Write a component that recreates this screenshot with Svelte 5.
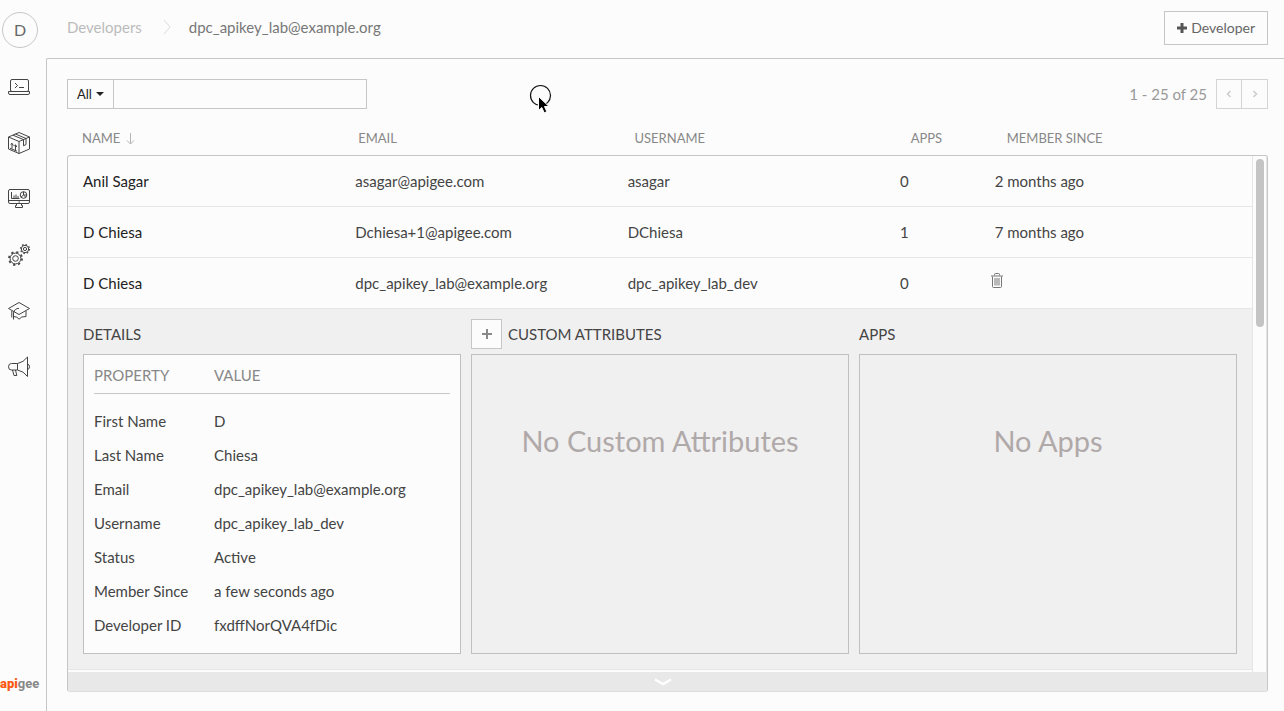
<script>
  const developers = [
    { name: 'Anil Sagar', email: 'asagar@apigee.com', username: 'asagar', apps: 0, since: '2 months ago' },
    { name: 'D Chiesa', email: 'Dchiesa+1@apigee.com', username: 'DChiesa', apps: 1, since: '7 months ago' },
    { name: 'D Chiesa', email: 'dpc_apikey_lab@example.org', username: 'dpc_apikey_lab_dev', apps: 0, since: null }
  ];

  const details = [
    ['First Name', 'D'],
    ['Last Name', 'Chiesa'],
    ['Email', 'dpc_apikey_lab@example.org'],
    ['Username', 'dpc_apikey_lab_dev'],
    ['Status', 'Active'],
    ['Member Since', 'a few seconds ago'],
    ['Developer ID', 'fxdffNorQVA4fDic']
  ];

  let query = $state('');
</script>

<div class="shell">
  <nav class="rail" aria-label="Main">
    <button class="avatar" aria-label="Account">D</button>
    <a href="#develop" aria-label="Develop">
      <svg width="24" height="24" viewBox="0 0 24 24"><rect x="3.500" y="4.500" width="18" height="12" rx="1.500" /><path d="M1.500 16.500h21v1.500q0 1.500-1.500 1.500H3q-1.500 0-1.500-1.500z" /><path d="M8 8l2.500 2.500L8 13M12 12.500h5" /></svg>
    </a>
    <a href="#publish" aria-label="Publish">
      <svg width="24" height="24" viewBox="0 0 24 24"><path d="M12 1.500l10.500 4.500v12L12 22.500 1.500 18V6zM1.500 6L12 10.500 22.500 6M12 10.500v12M8.500 3l10.500 4.500v6l-2.500 1.300V8.600L6 4.200M3 17.200l7 3M5 17.500v-5M3.600 13.500L5 12.300l1.400 2.300M8.500 19v-5M7.200 15l1.300-1.200 1.300 2.200" /></svg>
    </a>
    <a href="#analyze" aria-label="Analyze">
      <svg width="24" height="24" viewBox="0 0 24 24"><rect x="1.500" y="2.500" width="21" height="14" rx="1.500" /><path d="M1.500 13.500h21M11.500 15h1.500M9.500 16.500v2h-1v2h7v-2h-1v-2M4.500 5v6.500h8M7 11V8.500M9 11V7.500M11 11V9" /><circle cx="16.500" cy="8" r="3.300" /><path d="M16.500 4.700V8h3.300M16.500 8l-2.600 2.200M16.500 8l2.400 2.300" /></svg>
    </a>
    <a href="#admin" aria-label="Admin">
      <svg width="24" height="24" viewBox="0 0 24 24"><circle cx="8.500" cy="15.500" r="5.400" /><circle cx="8.500" cy="15.500" r="2.800" /><circle cx="8.500" cy="15.500" r="6.500" stroke-width="1.800" stroke-dasharray="2.200 2.905" /><circle cx="18" cy="6" r="3.700" /><circle cx="18" cy="6" r="1.600" /><circle cx="18" cy="6" r="4.500" stroke-width="1.300" stroke-dasharray="1.500 2.034" /></svg>
    </a>
    <a href="#learn" aria-label="Learn">
      <svg width="24" height="24" viewBox="0 0 24 24"><path d="M1.500 9.500L12 3.500l10.500 6L12 15.500zM12 9.300q-4.500.2-5.500 4.700v6.500M4.800 12v6.500M6.500 17.500q4 0 5.500 2.700 2-3 7-2.700v-5.500" /></svg>
    </a>
    <a href="#announcements" aria-label="Announcements">
      <svg width="24" height="24" viewBox="0 0 24 24"><path d="M10.500 8.500H4.500q-3 0-3 3.300t3 3.200h6zM10.500 8.500q6-1 10-6.500v19.500q-4-5.500-10-6.500M20.500 9q2 .5 2 2.800t-2 2.700M5.500 15l1.500 5.500h2.800L8.500 15" /></svg>
    </a>
    <div class="logo"><b>api</b>gee</div>
  </nav>

  <div class="page">
    <header>
      <div class="crumbs">
        <a href="#developers">Developers</a>
        <svg width="8" height="16" viewBox="0 0 8 16"><path d="M1 1l6 7-6 7" fill="none" stroke="#dcdcdc" /></svg>
        <span>dpc_apikey_lab@example.org</span>
      </div>
      <button class="add-dev">
        <svg width="10" height="10" viewBox="0 0 10 10"><path d="M5 0v10M0 5h10" stroke="#555" stroke-width="3" /></svg>
        Developer
      </button>
    </header>

    <main>
      <div class="toolbar">
        <div class="search">
          <button>All <i class="caret"></i></button>
          <input type="text" aria-label="Search developers" bind:value={query} />
        </div>
        <div class="pager">
          <span>1 - 25 of 25</span>
          <div class="pages">
            <button aria-label="Previous page"><svg width="6" height="8" viewBox="0 0 6 8"><path d="M4.500 1l-3 3 3 3" fill="none" stroke="#ccc" stroke-width="1.500" /></svg></button>
            <button aria-label="Next page"><svg width="6" height="8" viewBox="0 0 6 8"><path d="M1.500 1l3 3-3 3" fill="none" stroke="#ccc" stroke-width="1.500" /></svg></button>
          </div>
        </div>
        <svg class="pointer" width="24" height="32" viewBox="0 0 24 32"><circle cx="11.500" cy="11.500" r="10" fill="none" stroke="#111" stroke-width="1.200" /><path d="M9.500 12.500v14l3.300-3 2.400 5.300 2.600-1.100-2.300-5.200h4.500z" fill="#000" stroke="#fff" /></svg>
      </div>

      <table class="heads">
        <thead>
          <tr>
            <th>NAME <svg width="9" height="12" viewBox="0 0 9 12"><path d="M4.500 0v11M1 7.500L4.500 11 8 7.500" fill="none" stroke="#b5b5b5" /></svg></th>
            <th>EMAIL</th>
            <th>USERNAME</th>
            <th class="narrow">APPS</th>
            <th>MEMBER SINCE</th>
          </tr>
        </thead>
      </table>

      <section class="panel">
        <div class="view">
          <div class="content">
            <table class="rows" aria-label="Developers">
              <tbody>
                {#each developers as dev}
                  <tr>
                    <td class="name">{dev.name}</td>
                    <td>{dev.email}</td>
                    <td>{dev.username}</td>
                    <td class="narrow">{dev.apps}</td>
                    <td>
                      {#if dev.since}
                        {dev.since}
                      {:else}
                        <button class="trash" aria-label="Delete developer">
                          <svg width="12" height="15" viewBox="0 0 12 15"><path d="M3.500 2.500v-1q0-1 1-1h3q1 0 1 1v1M0 3h12M1.500 3.500v10q0 1 1 1h7q1 0 1-1v-10M4 5v7.500M6 5v7.500M8 5v7.500" fill="none" stroke="#777" /></svg>
                        </button>
                      {/if}
                    </td>
                  </tr>
                {/each}
              </tbody>
            </table>

            <div class="expanded">
              <div class="col">
                <h2>DETAILS</h2>
                <div class="box light">
                  <table class="props">
                    <thead><tr><th class="key">PROPERTY</th><th>VALUE</th></tr></thead>
                    <tbody>
                      {#each details as [key, value]}
                        <tr><td>{key}</td><td>{value}</td></tr>
                      {/each}
                    </tbody>
                  </table>
                </div>
              </div>
              <div class="col">
                <h2>
                  <button class="plus" aria-label="Add custom attribute"><svg width="10" height="10" viewBox="0 0 10 10"><path d="M5 0v10M0 5h10" stroke="#888" stroke-width="2" /></svg></button>
                  CUSTOM ATTRIBUTES
                </h2>
                <div class="box"><p>No Custom Attributes</p></div>
              </div>
              <div class="col">
                <h2>APPS</h2>
                <div class="box"><p>No Apps</p></div>
              </div>
            </div>
          </div>
          <div class="track"><div class="thumb"></div></div>
        </div>
        <button class="more" aria-label="Show more">
          <svg width="18" height="8" viewBox="0 0 18 8"><path d="M1 1.500l8 4.500 8-4.500" fill="none" stroke="#fff" stroke-width="2.500" /></svg>
        </button>
      </section>
    </main>
  </div>
</div>

<style>
  :global(body) {
    margin: 0;
    background: #fcfcfc;
  }
  .shell {
    display: flex;
    min-height: 100vh;
    overflow: hidden;
    font: 15px/20px Lato, sans-serif;
    color: #444;
  }
  .shell * {
    box-sizing: border-box;
  }
  button, input {
    margin: 0;
    padding: 0;
    font: inherit;
    color: inherit;
    background: #fcfcfc;
    border: 1px solid #c6c6c6;
    border-radius: 0;
  }
  svg {
    display: block;
    flex: none;
  }
  a {
    text-decoration: none;
  }
  table {
    width: 100%;
    table-layout: fixed;
    border-spacing: 0;
  }
  th, td {
    padding: 0;
    text-align: left;
    font-weight: 400;
    white-space: nowrap;
  }

  .rail {
    flex: none;
    width: 46px;
    display: flex;
    flex-direction: column;
  }
  .rail a {
    height: 24px;
    margin: 0 7px 32px;
  }
  .rail svg {
    fill: none;
    stroke: #444;
  }
  .avatar {
    width: 36px;
    height: 36px;
    margin: 12px 2px 27px;
    border-radius: 50%;
    font-size: 16px;
    color: #666;
  }
  .logo {
    margin-top: auto;
    padding-bottom: 18px;
    font: 700 13px/20px Roboto, sans-serif;
    color: #888;
  }
  .logo b {
    color: #fa5a14;
  }

  .page {
    flex: 1;
    min-width: 0;
    display: flex;
    flex-direction: column;
  }
  header {
    height: 58px;
    padding: 0 16px 0 21px;
    display: flex;
    justify-content: space-between;
  }
  .crumbs {
    display: flex;
    align-items: center;
    height: 54px;
    color: #777;
  }
  .crumbs a {
    color: #bbb;
  }
  .crumbs svg {
    margin: 0 18px 0 21px;
  }
  .add-dev {
    display: flex;
    align-items: center;
    gap: 4px;
    height: 34px;
    margin-top: 11px;
    padding: 0 12px;
    font-size: 14px;
    color: #666;
  }

  main {
    flex: 1;
    padding: 20px 16px 20px 20px;
    border: solid #c6c6c6;
    border-width: 1px 0 0 1px;
    border-top-left-radius: 2px;
  }
  .toolbar {
    position: relative;
    display: flex;
    justify-content: space-between;
    height: 30px;
  }
  .search {
    display: flex;
    width: 300px;
  }
  .search button {
    display: flex;
    align-items: center;
    justify-content: center;
    gap: 4px;
    width: 47px;
    font-size: 13px;
    color: #222;
  }
  .search input {
    flex: 1;
    min-width: 0;
    border-left: 0;
    padding: 0 8px;
  }
  .caret {
    border: 4px solid transparent;
    border-top-color: #222;
    border-bottom: 0;
  }
  .pager {
    display: flex;
    align-items: center;
    gap: 9px;
    color: #999;
  }
  .pages {
    display: flex;
  }
  .pages button {
    display: flex;
    align-items: center;
    justify-content: center;
    width: 26px;
    height: 30px;
    border-color: #d4d4d4;
  }
  .pages button + button {
    border-left: 0;
  }
  .pointer {
    position: absolute;
    left: 462px;
    top: 5px;
  }

  .heads th {
    width: 23%;
    height: 46px;
    padding: 12px 0 0 15px;
    font-size: 13px;
    color: #888;
  }
  .heads svg {
    display: inline-block;
    vertical-align: -2px;
    margin-left: 2px;
  }
  .heads .narrow, .rows .narrow {
    width: 8%;
  }

  .panel {
    border: 1px solid #c6c6c6;
    border-bottom-color: #ddd;
    border-radius: 3px;
    overflow: hidden;
  }
  .view {
    display: flex;
  }
  .content {
    flex: 1;
    min-width: 0;
    padding-bottom: 2px;
  }
  .rows td {
    width: 23%;
    height: 51px;
    padding-left: 15px;
    border-bottom: 1px solid #e6e6e6;
  }
  .rows .name {
    color: #222;
  }
  .trash {
    display: block;
    margin: 0 0 6px -4px;
    border: 0;
  }
  .track {
    flex: none;
    width: 15px;
    padding: 3px;
    border-left: 1px solid #e6e6e6;
    border-right: 1px solid #e6e6e6;
  }
  .thumb {
    width: 8px;
    height: 168px;
    border-radius: 4px;
    background: #c4c4c4;
  }

  .expanded {
    display: grid;
    grid-template-columns: repeat(3, 1fr);
    gap: 10px;
    padding: 10px 15px 15px;
    background: #f0f0f0;
    border-bottom: 1px solid #e6e6e6;
  }
  h2 {
    display: flex;
    align-items: center;
    gap: 6px;
    height: 30px;
    margin: 0 0 5px;
    font-size: 15px;
    font-weight: 400;
  }
  .plus {
    display: flex;
    align-items: center;
    justify-content: center;
    width: 31px;
    height: 30px;
  }
  .box {
    min-height: 300px;
    border: 1px solid #c0c0c0;
  }
  .light {
    padding: 0 10px 11px;
    background: #fcfcfc;
  }
  .box p {
    margin: 67px 0 0;
    font-size: 29px;
    line-height: 38px;
    text-align: center;
    color: #b0a9a9;
  }
  .props th {
    height: 39px;
    padding-top: 2px;
    border-bottom: 1px solid #c6c6c6;
    color: #888;
  }
  .props .key {
    width: 120px;
  }
  .props tbody::before {
    content: '';
    display: block;
    height: 10px;
  }
  .props td {
    height: 34px;
  }
  .more {
    display: flex;
    align-items: center;
    justify-content: center;
    width: 100%;
    height: 19px;
    padding-right: 10px;
    border: 0;
    background: #e8e8e8;
  }
</style>
